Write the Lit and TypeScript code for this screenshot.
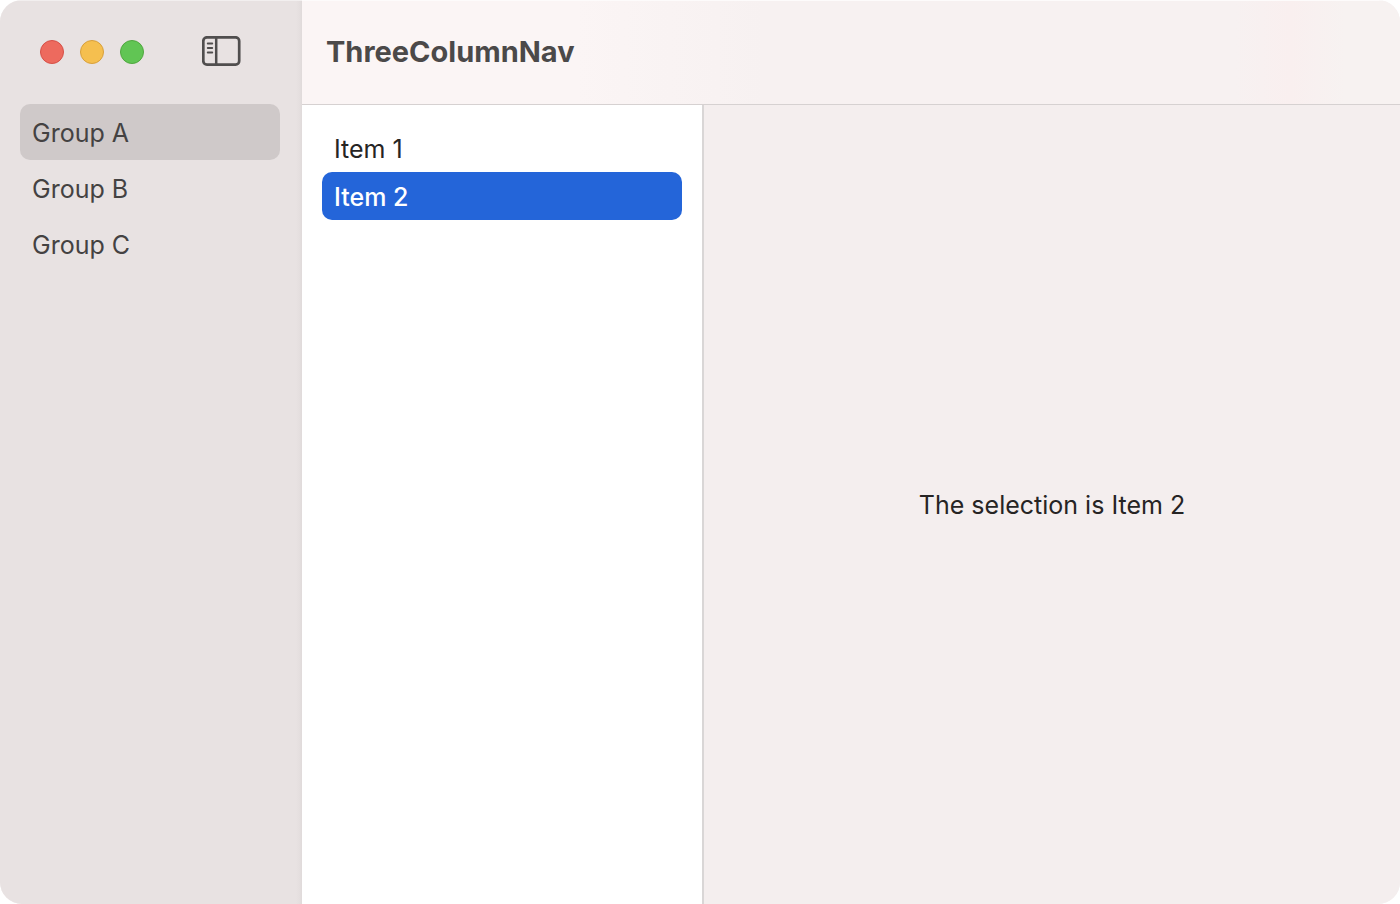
import { LitElement, html, css } from "lit";
import { customElement, state } from "lit/decorators.js";
import { classMap } from "lit/directives/class-map.js";

const GROUPS = ["Group A", "Group B", "Group C"];
const ITEMS = ["Item 1", "Item 2"];

@customElement("app-root")
export class AppRoot extends LitElement {
  @state() private group = "Group A";
  @state() private item = "Item 2";
  @state() private sidebarOpen = true;

  static styles = css`
    :host {
      display: block;
      min-height: 100vh;
      background: #ffffff;
      color: #262424;
      font-family: Inter, "Liberation Sans", sans-serif;
      font-size: 25px;
      font-weight: 400;
      line-height: 32px;
    }
    * {
      box-sizing: border-box;
    }
    button {
      font: inherit;
      color: inherit;
      border: 0;
      margin: 0;
      padding: 0;
      background: none;
      text-align: left;
    }
    .window {
      display: flex;
      min-height: 100vh;
      border-radius: 22px;
      overflow: hidden;
      background: #f4eeee;
    }
    .sidebar {
      flex: 0 0 302px;
      display: flex;
      flex-direction: column;
      background: linear-gradient(to right, #e8e2e2 296px, #e4dede 300px, #dfdada 302px);
      border-top: 1px solid #f2efef;
      color: #444242;
    }
    .collapsed .sidebar {
      display: none;
    }
    .controls {
      display: flex;
      align-items: center;
      height: 103px;
      padding: 0 40px 2px;
      gap: 16px;
    }
    .light {
      width: 24px;
      height: 24px;
      border-radius: 50%;
      border: 1px solid;
    }
    .close {
      background: #ed6a5e;
      border-color: #d65047;
    }
    .minimise {
      background: #f5bf4f;
      border-color: #d8a03c;
    }
    .zoom {
      background: #61c554;
      border-color: #50a73f;
    }
    .toggle {
      display: flex;
      margin-left: auto;
    }
    .list {
      list-style: none;
      margin: 0;
      padding: 0 20px;
    }
    .row {
      display: block;
      width: 100%;
      height: 48px;
      padding: 2px 12px 0;
      border-radius: 10px;
    }
    .sidebar .list {
      padding-right: 22px;
    }
    .sidebar .row {
      height: 56px;
    }
    .sidebar .selected {
      background: #cfc9c9;
    }
    .content .selected {
      background: #2465d9;
      color: #ffffff;
      font-weight: 500;
    }
    .main {
      flex: 1;
      min-width: 0;
      display: flex;
      flex-direction: column;
    }
    .toolbar {
      display: flex;
      align-items: center;
      height: 105px;
      padding: 0 24px 2px;
      border-top: 1px solid #fdfbfb;
      border-bottom: 1px solid #d6d1d1;
      background: linear-gradient(to right, #fbf5f5 25%, #f7f1f1 42%, #f7f1f1 85%, #f9efef 90%, #f7f2f1 95%);
    }
    .title {
      margin: 0;
      font-size: 29px;
      line-height: 36px;
      font-weight: 700;
      color: #4b4949;
    }
    .columns {
      flex: 1;
      display: flex;
    }
    .content {
      flex: 0 0 402px;
      padding-top: 19px;
      background: #ffffff;
      border-right: 2px solid #d9d6d6;
    }
    .detail {
      flex: 1;
      min-width: 0;
      display: flex;
      align-items: center;
      justify-content: center;
      background: #f4eeee;
    }
    .message {
      margin: 0;
    }
  `;

  private renderRows(names: string[], selected: string, pick: (name: string) => void) {
    return html`<ul class="list">
      ${names.map(
        (name) => html`<li>
          <button
            class=${classMap({ row: true, selected: name === selected })}
            aria-pressed=${name === selected}
            @click=${() => pick(name)}
          >${name}</button>
        </li>`
      )}
    </ul>`;
  }

  render() {
    return html`
      <div class=${classMap({ window: true, collapsed: !this.sidebarOpen })}>
        <nav class="sidebar" aria-label="Groups">
          <div class="controls">
            <button class="light close" aria-label="Close"></button>
            <button class="light minimise" aria-label="Minimise"></button>
            <button class="light zoom" aria-label="Zoom"></button>
            <button
              class="toggle"
              aria-label="Toggle sidebar"
              @click=${() => (this.sidebarOpen = !this.sidebarOpen)}
            >
              <svg width="60" height="32" viewBox="0 0 60 32" fill="none" stroke="#504e4e" aria-hidden="true">
                <rect x="1.3" y="1.3" width="35.9" height="27.4" rx="3.6" stroke-width="2.7" />
                <path d="M14.2 1.5v27" stroke-width="2.5" />
                <path d="M5.8 7.6h4.4M5.8 12h4.4M5.8 16.4h4.4" stroke-width="2" stroke-linecap="round" />
              </svg>
            </button>
          </div>
          ${this.renderRows(GROUPS, this.group, (name) => (this.group = name))}
        </nav>
        <div class="main">
          <header class="toolbar"><h1 class="title">ThreeColumnNav</h1></header>
          <div class="columns">
            <section class="content" aria-label="Items">
              ${this.renderRows(ITEMS, this.item, (name) => (this.item = name))}
            </section>
            <main class="detail"><p class="message">The selection is ${this.item}</p></main>
          </div>
        </div>
      </div>
    `;
  }
}
